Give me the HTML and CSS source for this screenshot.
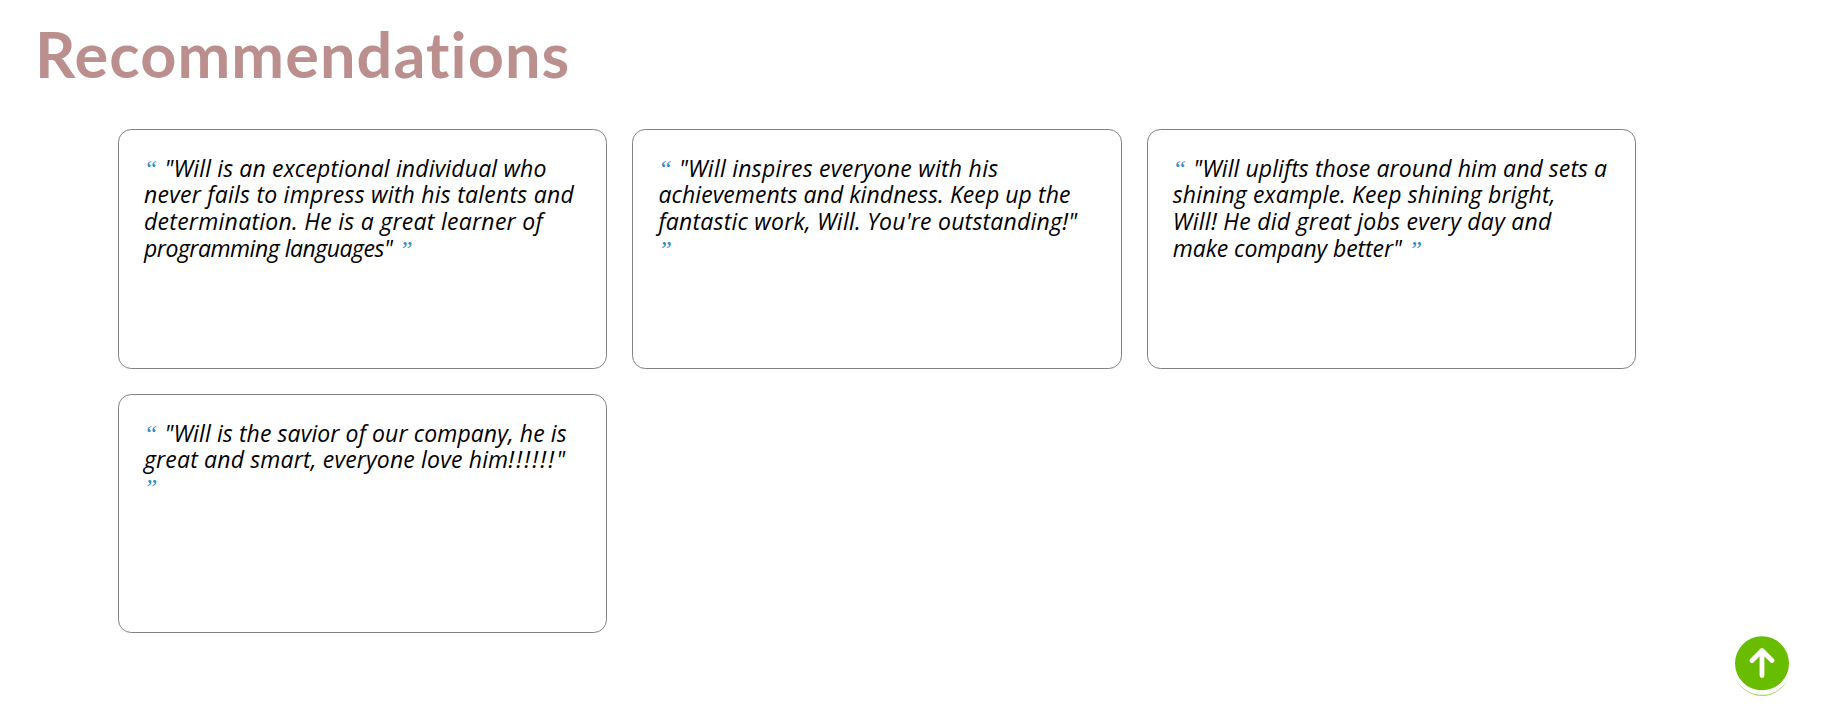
FILE: index.html
```
<!DOCTYPE html>
<html lang="en">
<head>
<meta charset="utf-8">
<title>Recommendations</title>
<link rel="stylesheet" href="styles.css">
</head>
<body>
<section class="recommendations">
<h1 class="title">Recommendations</h1>
<div class="cards">
<article class="card"><span class="mark open">“</span><span class="t1">"Will is an exceptional individual who</span><br><span class="t2">never fails to impress with his talents and</span><br><span class="t3">determination. He is a great learner of</span><br><span class="t4">programming languages"</span><span class="mark close">”</span></article>
<article class="card"><span class="mark open">“</span><span class="t5">"Will inspires everyone with his</span><br><span class="t6">achievements and kindness. Keep up the</span><br><span class="t7">fantastic work, Will. You're outstanding!"</span><br><span class="mark open">”</span></article>
<article class="card"><span class="mark open">“</span><span class="t8">"Will uplifts those around him and sets a</span><br><span class="t9">shining example. Keep shining bright,</span><br><span class="t10">Will! He did great jobs every day and</span><br><span class="t11">make company better"</span><span class="mark close">”</span></article>
<article class="card"><span class="mark open">“</span><span class="t12">"Will is the savior of our company, he is</span><br><span class="t13">great and smart, everyone love him<span class="bangs">!!!!!!</span>"</span><br><span class="mark open">”</span></article>
</div>
</section>
<a class="to-top" href="#" aria-label="Back to top">
<svg width="56" height="62" viewBox="0 0 56 62">
<path d="M1.5 41A28 28 0 0 0 54.5 41A28.3 27.5 0 0 1 1.5 41Z" fill="#68bd00" opacity=".6"/>
<circle cx="28" cy="27.3" r="27" fill="#68bd00"/>
<path d="M28 39.5V15M18 24.5L28 14.5L38 24.5" fill="none" stroke="#fff" stroke-width="4.8" stroke-linecap="round" stroke-linejoin="round"/>
</svg>
</a>
</body>
</html>
```
FILE: styles.css
```
body {
  margin: 0;
  height: 708px;
  overflow: hidden;
  background: #fff;
  font-family: "Open Sans", sans-serif;
}
.title {
  margin: 0;
  padding: 16px 0 0 35px;
  height: 113px;
  box-sizing: border-box;
  font: 700 63px/76px Lato, sans-serif;
  letter-spacing: 1.1px;
  color: #bc8f8f;
}
.cards {
  display: grid;
  grid-template-columns: repeat(3, 489.3px);
  grid-template-rows: 240px 239px;
  gap: 25px 25.1px;
  padding: 16px 0 0 118px;
}
.card {
  box-sizing: border-box;
  border: 1px solid #808080;
  border-radius: 13.3px;
  padding: 24.8px 0 0 25px;
  font-size: 23px;
  font-style: italic;
  line-height: 26.67px;
  color: #000;
  white-space: nowrap;
}
.mark {
  font-family: "Liberation Serif", serif;
  font-size: 24px;
  line-height: 1px;
  color: #2f8abf;
}
.open { display: inline-block; width: 20.5px; }
.close { margin-left: 7px; }
.t1 { letter-spacing: .15px; }
.t2 { letter-spacing: .24px; }
.t3 { letter-spacing: .27px; }
.t4 { letter-spacing: -.48px; }
.t5 { letter-spacing: .26px; }
.t6 { letter-spacing: .07px; }
.t7 { letter-spacing: .22px; }
.t8 { letter-spacing: .07px; }
.t9 { letter-spacing: .13px; }
.t10 { letter-spacing: .27px; }
.t11 { letter-spacing: -.08px; }
.t12 { letter-spacing: .1px; }
.t13 { letter-spacing: .17px; }
.bangs { letter-spacing: 2.1px; }
.to-top {
  position: fixed;
  left: 1734px;
  top: 636px;
}
.to-top svg { display: block; }
```
